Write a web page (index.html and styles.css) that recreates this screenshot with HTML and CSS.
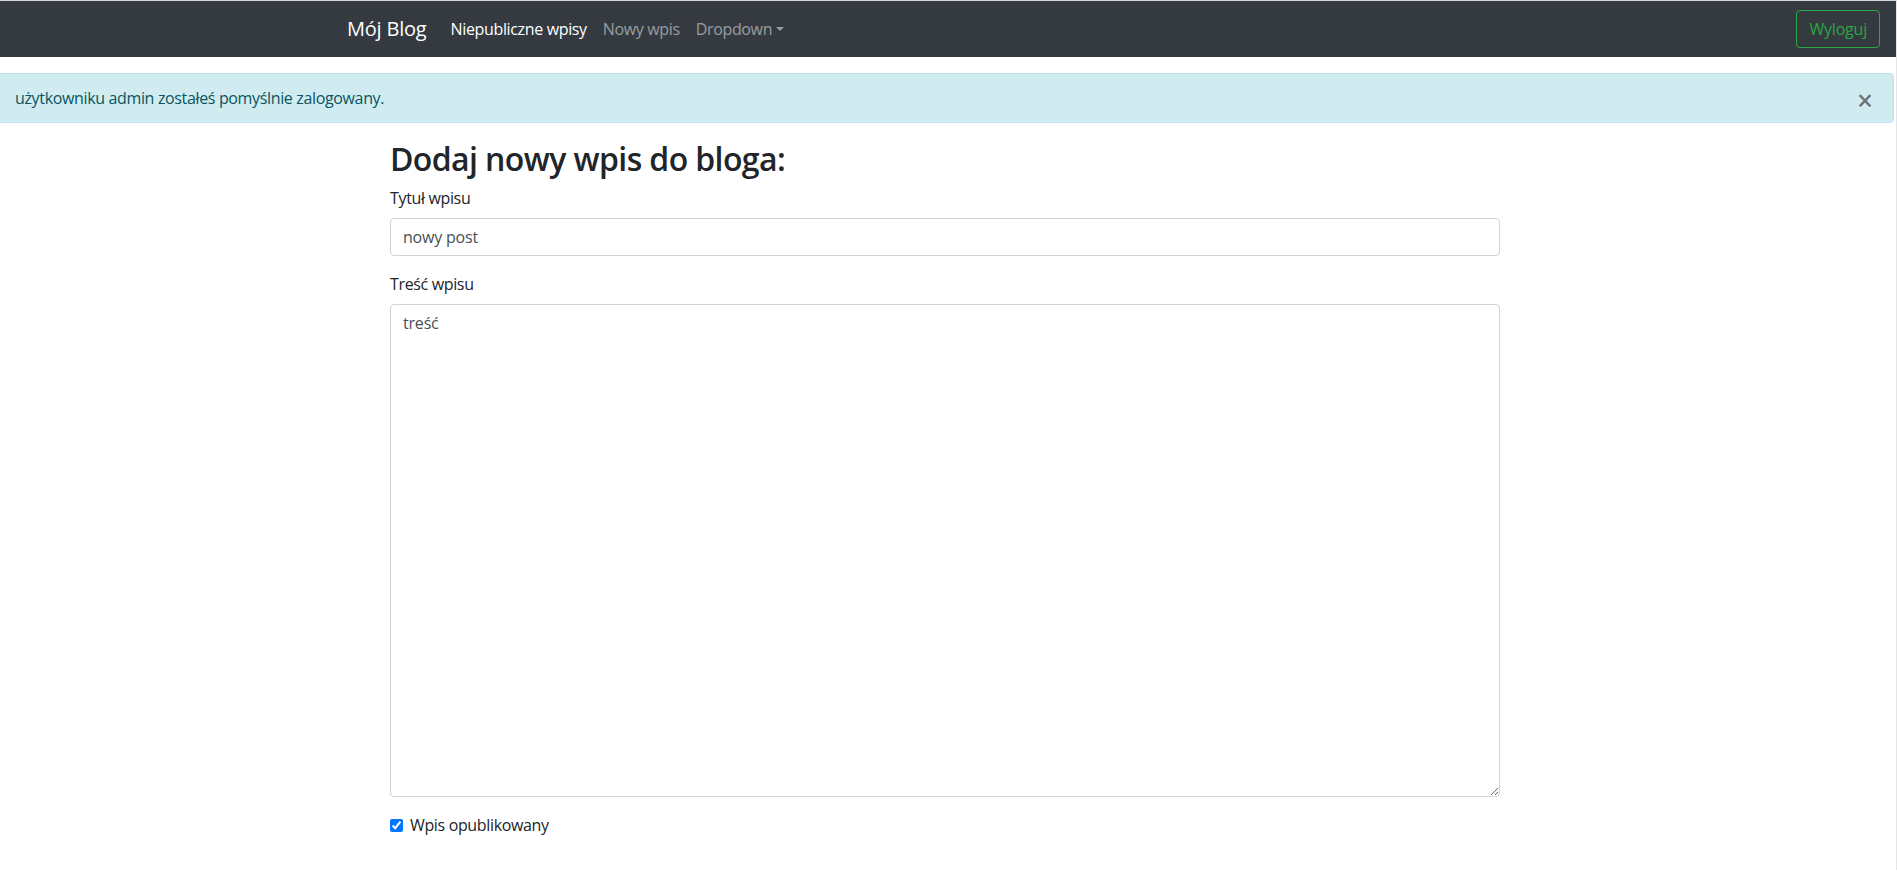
FILE: index.html
```html
<!DOCTYPE html>
<html lang="pl">
<head>
<meta charset="utf-8">
<title>Mój Blog</title>
<link rel="stylesheet" href="styles.css">
</head>
<body>
<nav class="navbar">
  <a class="brand" href="#">Mój Blog</a>
  <ul class="nav">
    <li><a class="nav-link active" href="#">Niepubliczne wpisy</a></li>
    <li><a class="nav-link" href="#">Nowy wpis</a></li>
    <li><a class="nav-link dropdown-toggle" href="#">Dropdown</a></li>
  </ul>
  <button class="btn-logout" type="button">Wyloguj</button>
</nav>
<div class="alert">
  <span>użytkowniku admin zostałeś pomyślnie zalogowany.</span>
  <button class="close" type="button">×</button>
</div>
<main class="container">
  <h2 class="title">Dodaj nowy wpis do bloga:</h2>
  <form>
    <div class="form-group">
      <label class="label" for="t">Tytuł wpisu</label>
      <input class="control" id="t" type="text" value="nowy post">
    </div>
    <div class="form-group">
      <label class="label" for="c">Treść wpisu</label>
      <textarea class="control area" id="c">treść</textarea>
    </div>
    <div class="form-check">
      <input class="check" id="p" type="checkbox" checked>
      <label class="check-label" for="p">Wpis opublikowany</label>
    </div>
  </form>
</main>
</body>
</html>
```
FILE: styles.css
```css
* { box-sizing: border-box; }
html, body { margin: 0; padding: 0; }
body {
  font-family: "Open Sans", "Noto Sans", sans-serif;
  font-size: 16px;
  line-height: 1.5;
  letter-spacing: -0.35px;
  color: #212529;
  background: #fff;
  border-top: 1px solid #d6d6d6;
  border-right: 1px solid #e6e6e6;
  min-height: 870px;
}
.navbar {
  display: flex;
  align-items: center;
  height: 56px;
  padding: 8px 16px;
  background: #343a40;
}
.brand {
  margin-left: 331px;
  margin-right: 16px;
  font-size: 20px;
  line-height: 30px;
  letter-spacing: -0.2px;
  color: #fff;
  text-decoration: none;
}
.nav {
  display: flex;
  list-style: none;
  margin: 0;
  padding: 0;
  flex: 1;
}
.nav-link {
  display: block;
  padding: 8px;
  color: rgba(255,255,255,.5);
  text-decoration: none;
  line-height: 24px;
}
.nav-link.active { color: #fff; }
.dropdown-toggle::after {
  content: "";
  display: inline-block;
  margin-left: .255em;
  vertical-align: .255em;
  border-top: .3em solid;
  border-right: .3em solid transparent;
  border-left: .3em solid transparent;
}
.btn-logout {
  font-family: inherit;
  font-size: 16px;
  line-height: 24px;
  letter-spacing: -0.2px;
  padding: 6px 12px;
  background: transparent;
  color: #28a745;
  border: 1px solid #28a745;
  border-radius: 4px;
}
.alert {
  position: relative;
  margin: 16px 2px 0 -6px;
  padding: 12px 20px;
  background: #d1ecf1;
  border: 1px solid #bee5eb;
  border-radius: 4px;
  color: #0c5460;
  line-height: 24px;
}
.close {
  position: absolute;
  top: 0;
  right: 0;
  padding: 12px 20px;
  background: transparent;
  border: 0;
  font-family: "Open Sans", sans-serif;
  font-size: 28px;
  font-weight: 600;
  line-height: 1;
  letter-spacing: 0;
  color: #000;
  opacity: .5;
  text-shadow: 0 1px 0 #fff;
}
.container {
  width: 1110px;
  margin-left: 390px;
}
.title {
  margin: 17px 0 8px;
  font-size: 32px;
  font-weight: 600;
  line-height: 1.2;
  letter-spacing: -0.6px;
}
.form-group { margin-bottom: 16px; }
.label {
  display: inline-block;
  margin-bottom: 8px;
}
.control {
  display: block;
  width: 100%;
  height: 38px;
  padding: 6px 12px;
  font-family: inherit;
  font-size: 16px;
  line-height: 24px;
  letter-spacing: -0.2px;
  color: #495057;
  background: #fff;
  border: 1px solid #ced4da;
  border-radius: 4px;
}
.area {
  height: 493px;
  resize: vertical;
}
.form-check {
  display: flex;
  align-items: center;
  gap: 7px;
}
.check {
  margin: 0;
  width: 13px;
  height: 13px;
}
.check-label { line-height: 24px; }
```
